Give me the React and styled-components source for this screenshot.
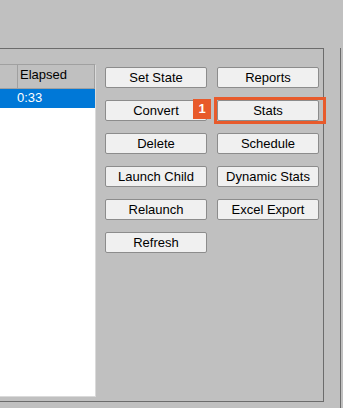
import React from "react";
import styled, { createGlobalStyle } from "styled-components";

const GlobalStyle = createGlobalStyle`
  html, body {
    margin: 0;
    padding: 0;
    background: #c0c0c0;
  }
  body {
    font-family: "Liberation Sans", Arial, sans-serif;
    font-size: 13px;
  }
`;

const Screen = styled.div`
  width: 343px;
  height: 408px;
  overflow: hidden;
  background: #c0c0c0;
  display: flex;
  flex-direction: column;
`;

const TopStrip = styled.div`
  height: 48px;
  flex: none;
`;

const MainRow = styled.div`
  display: flex;
  align-items: flex-start;
`;

const Panel = styled.div`
  width: 324px;
  height: 354px;
  box-sizing: border-box;
  border-top: 1px solid #6c6c6c;
  border-right: 1px solid #6c6c6c;
  border-bottom: 1px solid #6c6c6c;
  display: flex;
  align-items: flex-start;
  padding-top: 15px;
`;

const Edge = styled.div`
  margin-left: 16px;
  width: 1px;
  height: 360px;
  background: #6c6c6c;
`;

const List = styled.div`
  width: 96px;
  height: 333px;
  box-sizing: border-box;
  background: #fff;
  border-top: 1px solid #a0a0a0;
  border-right: 1px solid #dadada;
  border-bottom: 1px solid #dadada;
  flex: none;
`;

const HeaderRow = styled.div`
  display: flex;
  height: 23px;
  background: #c0c0c0;
  border-bottom: 1px solid #a0a0a0;
  border-right: 1px solid #a0a0a0;
`;

const HeaderCell = styled.div`
  width: ${(p) => (p.$w ? `${p.$w}px` : "auto")};
  flex: ${(p) => (p.$w ? "none" : "1")};
  border-right: ${(p) => (p.$w ? "1px solid #a0a0a0" : "none")};
  padding-left: 2px;
  line-height: 20px;
  color: #000;
`;

const Row = styled.div`
  display: flex;
  height: 19px;
  background: ${(p) => (p.$selected ? "#0078d7" : "#fff")};
  color: ${(p) => (p.$selected ? "#fff" : "#000")};
`;

const Cell = styled.div`
  width: ${(p) => (p.$w ? `${p.$w}px` : "auto")};
  flex: ${(p) => (p.$w ? "none" : "1")};
  padding-left: 1px;
  line-height: 18px;
`;

const ButtonGrid = styled.div`
  display: grid;
  grid-template-columns: 102px 102px;
  grid-auto-rows: 21px;
  column-gap: 10px;
  row-gap: 12px;
  margin-left: 9px;
  margin-top: 3px;
`;

const Button = styled.button`
  position: relative;
  font-family: "Liberation Sans", Arial, sans-serif;
  font-size: 13px;
  color: #000;
  background: #f0f0f0;
  border: 1px solid #8c8c8c;
  border-radius: 2px;
  padding: 0;
  margin: 0;
  height: 21px;
  line-height: 19px;
  text-align: center;
`;

const Highlight = styled.span`
  position: absolute;
  left: -4px;
  right: -8px;
  top: -4px;
  bottom: -4px;
  border: 3px solid #e85a2b;
  pointer-events: none;
`;

const Badge = styled.span`
  position: absolute;
  left: -25px;
  top: -2px;
  width: 18px;
  height: 20px;
  background: #e85a2b;
  color: #fff;
  font-weight: bold;
  font-size: 13px;
  line-height: 20px;
  text-align: center;
`;

const buttons = [
  ["Set State", "Reports"],
  ["Convert", "Stats"],
  ["Delete", "Schedule"],
  ["Launch Child", "Dynamic Stats"],
  ["Relaunch", "Excel Export"],
  ["Refresh", null],
];

export default function App() {
  return (
    <>
      <GlobalStyle />
      <Screen>
        <TopStrip />
        <MainRow>
          <Panel>
            <List>
              <HeaderRow>
                <HeaderCell $w={15} />
                <HeaderCell>Elapsed</HeaderCell>
              </HeaderRow>
              <Row $selected>
                <Cell $w={15} />
                <Cell>0:33</Cell>
              </Row>
            </List>
            <ButtonGrid>
              {buttons.flatMap(([a, b], i) => [
                <Button key={a}>{a}</Button>,
                b ? (
                  <Button key={b}>
                    {b}
                    {b === "Stats" && (
                      <>
                        <Highlight />
                        <Badge>1</Badge>
                      </>
                    )}
                  </Button>
                ) : (
                  <span key={"empty-" + i} />
                ),
              ])}
            </ButtonGrid>
          </Panel>
          <Edge />
        </MainRow>
      </Screen>
    </>
  );
}
